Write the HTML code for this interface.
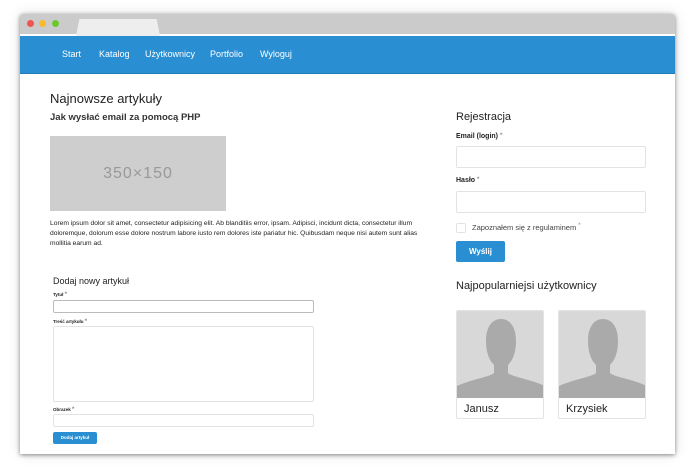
<!DOCTYPE html>
<html><head><meta charset="utf-8"><style>
*{box-sizing:border-box;margin:0;padding:0}
body{width:695px;height:468px;background:#fff;font-family:"Liberation Sans",sans-serif;position:relative;overflow:hidden;color:#222}
.win{position:absolute;left:20px;top:14px;width:655px;height:440px;background:#fff;box-shadow:0 1px 4px rgba(0,0,0,.45),0 0 14px rgba(0,0,0,.12);border-radius:3px 3px 0 0;overflow:hidden}
.tb{position:absolute;left:0;top:0;width:100%;height:20px;background:#cbcbcb}
.dot{position:absolute;top:6px;width:7px;height:7px;border-radius:50%}
.tab{position:absolute;left:56px;top:5px;width:84px;height:17px;background:#eee;clip-path:polygon(4% 0,96% 0,100% 100%,0 100%);border-radius:3px 3px 0 0}
.nav{position:absolute;left:0;top:22px;width:100%;height:38px;background:#2a8fd2;border-bottom:1px solid #237bb5}
.nav span{position:absolute;top:13px;color:#fff;font-size:9px}
.a{position:absolute;white-space:nowrap}
.inp{position:absolute;border:1px solid #e3e3e3;border-radius:2px;background:#fff}
.btn{position:absolute;background:#2a8fd2;color:#fff;border-radius:2px;text-align:center;font-weight:bold}
.card{position:absolute;width:88px;height:109px;border:1px solid #e3e3e3;border-radius:2px;overflow:hidden;background:#fff}
.card .ph{height:87px;background:#d8d8d8;position:relative}
.card .n{position:absolute;left:7px;top:92px;font-size:11px}
.s{font-size:6px;color:#888;vertical-align:top;line-height:1}
</style></head><body>
<div class="win">
<div class="tb"></div>
<div class="dot" style="left:7px;background:#f1544d"></div>
<div class="dot" style="left:19px;background:#f8bb2e"></div>
<div class="dot" style="left:32px;background:#6bc72d"></div>
<div class="tab"></div>
<div class="nav"><span style="left:42px">Start</span><span style="left:79px">Katalog</span><span style="left:125px">Użytkownicy</span><span style="left:190px">Portfolio</span><span style="left:240px">Wyloguj</span></div>
<div class="a" style="left:30px;top:77px;font-size:13px">Najnowsze artykuły</div>
<div class="a" style="left:30px;top:98px;font-size:9.5px;font-weight:bold;color:#333">Jak wysłać email za pomocą PHP</div>
<div class="a" style="left:30px;top:122px;width:176px;height:75px;background:#cecece;color:#999;font-size:16px;text-align:center;line-height:75px;letter-spacing:1px">350×150</div>
<div class="a" style="left:30px;top:205px;width:380px;white-space:normal;font-size:6.7px;line-height:10px">Lorem ipsum dolor sit amet, consectetur adipisicing elit. Ab blanditiis error, ipsam. Adipisci, incidunt dicta, consectetur illum doloremque, dolorum esse dolore nostrum labore iusto rem dolores iste pariatur hic. Quibusdam neque nisi autem sunt alias mollitia earum ad.</div>
<div class="a" style="left:33px;top:262px;font-size:9px">Dodaj nowy artykuł</div>
<div class="a" style="left:33px;top:278px;font-size:4.5px;font-weight:bold">Tytuł <span class="s">*</span></div>
<div class="inp" style="left:33px;top:286px;width:261px;height:13px;border-color:#bbb"></div>
<div class="a" style="left:33px;top:305px;font-size:4.5px;font-weight:bold">Treść artykułu <span class="s">*</span></div>
<div class="inp" style="left:33px;top:312px;width:261px;height:76px"></div>
<div class="a" style="left:33px;top:393px;font-size:4.5px;font-weight:bold">Obrazek <span class="s">*</span></div>
<div class="inp" style="left:33px;top:400px;width:261px;height:13px"></div>
<div class="btn" style="left:33px;top:418px;width:44px;height:12px;font-size:4.5px;line-height:12px">Dodaj artykuł</div>
<div class="a" style="left:436px;top:97px;font-size:11px">Rejestracja</div>
<div class="a" style="left:436px;top:119px;font-size:7px;font-weight:bold">Email (login) <span class="s">*</span></div>
<div class="inp" style="left:436px;top:132px;width:190px;height:22px"></div>
<div class="a" style="left:436px;top:163px;font-size:7px;font-weight:bold">Hasło <span class="s">*</span></div>
<div class="inp" style="left:436px;top:177px;width:190px;height:22px"></div>
<div class="inp" style="left:436px;top:209px;width:10px;height:10px"></div>
<div class="a" style="left:452px;top:209px;font-size:7.5px;color:#444">Zapoznałem się z regulaminem <span class="s">*</span></div>
<div class="btn" style="left:436px;top:227px;width:49px;height:21px;font-size:8px;line-height:21px">Wyślij</div>
<div class="a" style="left:436px;top:266px;font-size:11px">Najpopularniejsi użytkownicy</div>
<div class="card" style="left:436px;top:296px"><div class="ph"><svg width="88" height="87" viewBox="0 0 88 87"><path fill="#aaa" d="M44 8c-9 0-15 8-15 22 0 11 3 19 8 24v8c-4 4-22 6-37 13v12h88V75c-15-7-33-9-37-13v-8c5-5 8-13 8-24 0-14-6-22-15-22z"/></svg></div><div class="n">Janusz</div></div>
<div class="card" style="left:538px;top:296px"><div class="ph"><svg width="88" height="87" viewBox="0 0 88 87"><path fill="#aaa" d="M44 8c-9 0-15 8-15 22 0 11 3 19 8 24v8c-4 4-22 6-37 13v12h88V75c-15-7-33-9-37-13v-8c5-5 8-13 8-24 0-14-6-22-15-22z"/></svg></div><div class="n">Krzysiek</div></div>
</div>
</body></html>
